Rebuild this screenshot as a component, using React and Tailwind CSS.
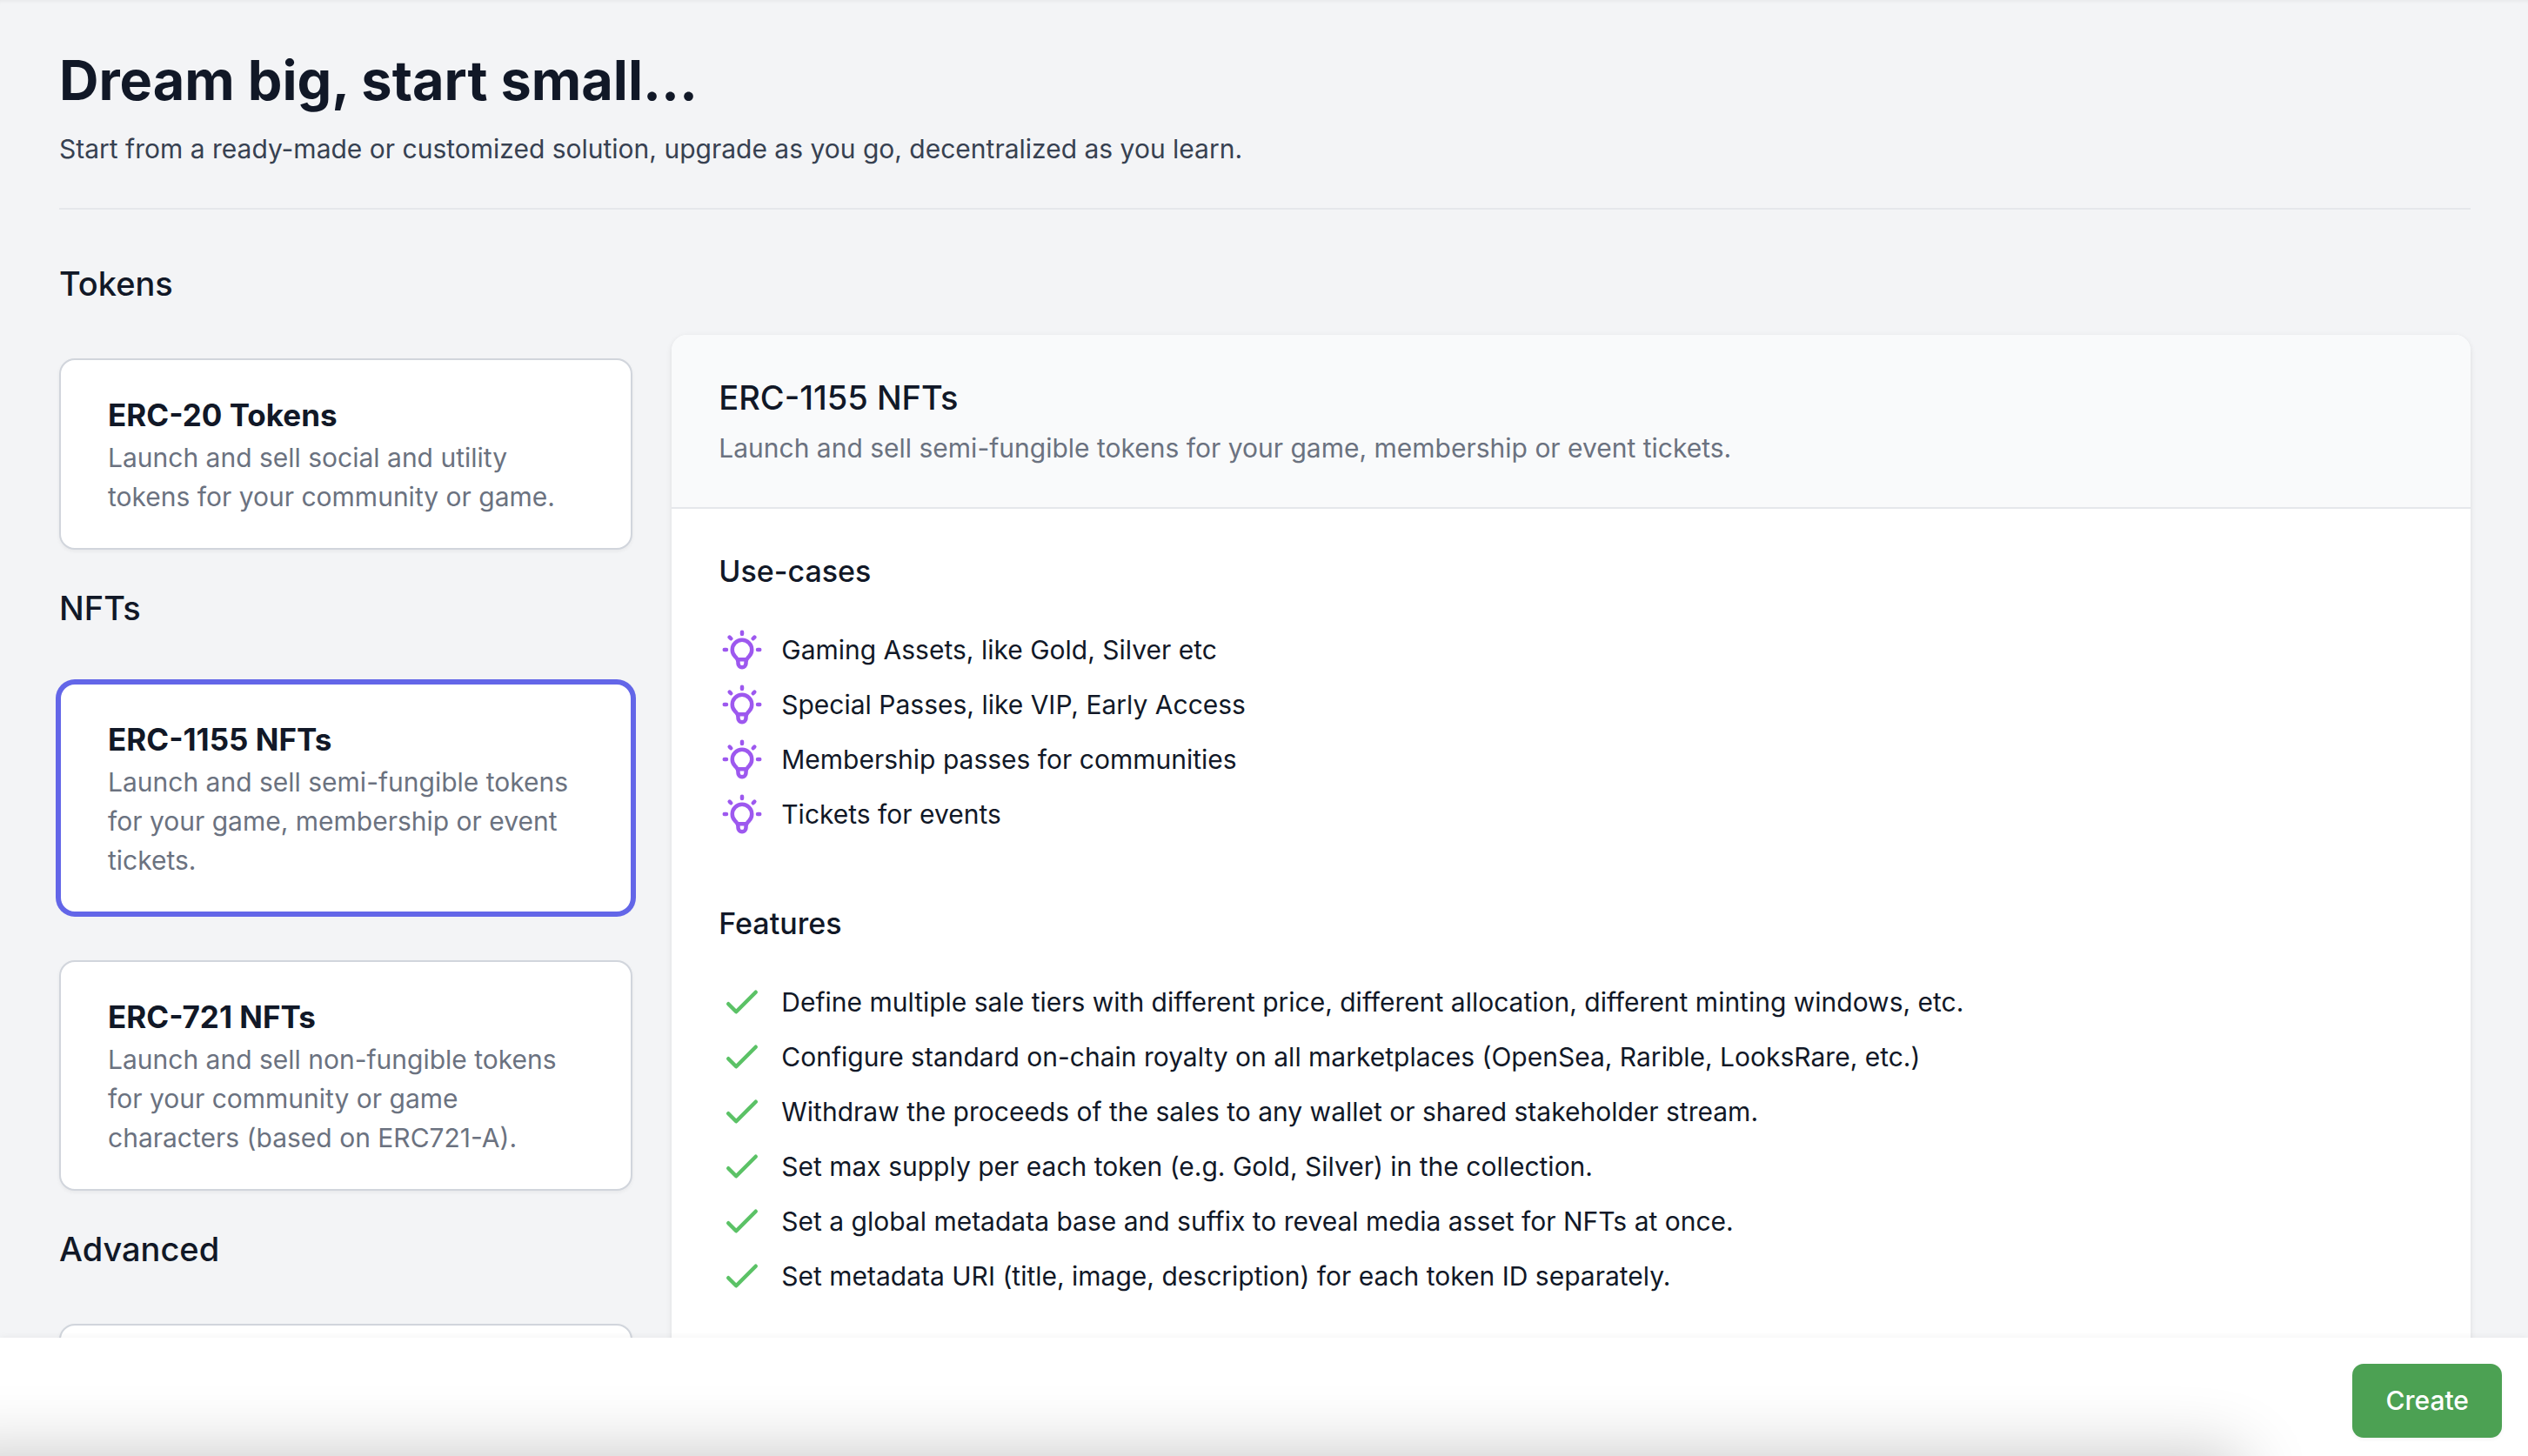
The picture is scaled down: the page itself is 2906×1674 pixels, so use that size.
const groups = [
  {
    name: "Tokens",
    items: [
      {
        title: "ERC-20 Tokens",
        text: "Launch and sell social and utility tokens for your community or game.",
      },
    ],
  },
  {
    name: "NFTs",
    items: [
      {
        title: "ERC-1155 NFTs",
        text: "Launch and sell semi-fungible tokens for your game, membership or event tickets.",
        selected: true,
      },
      {
        title: "ERC-721 NFTs",
        text: "Launch and sell non-fungible tokens for your community or game characters (based on ERC721-A).",
      },
    ],
  },
  { name: "Advanced", items: [{ title: "", text: "" }] },
];

const useCases = [
  "Gaming Assets, like Gold, Silver etc",
  "Special Passes, like VIP, Early Access",
  "Membership passes for communities",
  "Tickets for events",
];

const features = [
  "Define multiple sale tiers with different price, different allocation, different minting windows, etc.",
  "Configure standard on-chain royalty on all marketplaces (OpenSea, Rarible, LooksRare, etc.)",
  "Withdraw the proceeds of the sales to any wallet or shared stakeholder stream.",
  "Set max supply per each token (e.g. Gold, Silver) in the collection.",
  "Set a global metadata base and suffix to reveal media asset for NFTs at once.",
  "Set metadata URI (title, image, description) for each token ID separately.",
];

const bulb =
  "M9.663 17h4.673M12 3v1m6.364 1.636l-.707.707M21 12h-1M4 12H3m3.343-5.657l-.707-.707m2.828 9.9a5 5 0 117.072 0l-.548.547A3.374 3.374 0 0014 18.469V19a2 2 0 11-4 0v-.531c0-.895-.356-1.754-.988-2.386l-.548-.547z";
const check = "M5 13l4 4L19 7";

function Icon({ path, className }) {
  return (
    <svg
      viewBox="0 0 24 24"
      fill="none"
      stroke="currentColor"
      strokeWidth="2"
      strokeLinecap="round"
      strokeLinejoin="round"
      aria-hidden="true"
      className={"size-[54px] shrink-0 " + className}
    >
      <path d={path} />
    </svg>
  );
}

function OptionCard({ title, text, selected }) {
  return (
    <button
      type="button"
      aria-pressed={Boolean(selected)}
      aria-label={title || "Advanced option"}
      className={
        "block min-h-[220px] w-full rounded-[18px] border-2 bg-white px-[54px] py-9 text-left " +
        (selected
          ? "border-[#6366e8] ring-4 ring-[#6366e8]"
          : "border-gray-300 shadow-[0_2px_4px_rgba(0,0,0,0.05)]")
      }
    >
      <span className="block text-[35px] leading-[54px] font-bold">{title}</span>
      <span className="block text-[30px] leading-[45px] text-[#6b7280]">{text}</span>
    </button>
  );
}

function IconList({ title, items, path, iconClass }) {
  return (
    <section>
      <h3 className="text-[34px] leading-[54px] font-medium">{title}</h3>
      <ul className="mt-9 flex flex-col gap-[9px]">
        {items.map((item) => (
          <li key={item} className="flex items-center gap-[18px] text-[30px] leading-[54px]">
            <Icon path={path} className={iconClass} />
            <span>{item}</span>
          </li>
        ))}
      </ul>
    </section>
  );
}

export default function App() {
  return (
    <div className="flex h-screen flex-col overflow-hidden bg-[#f3f4f6] font-['Inter',sans-serif] text-[#111827]">
      <main className="min-h-0 flex-1 overflow-hidden pr-[66px] pl-[68px] shadow-[inset_0_6px_6px_-6px_rgba(0,0,0,0.08)]">
        <header className="border-b-2 border-[#e5e7eb] pt-[52px] pb-[45px]">
          <h1 className="text-[63px] leading-[80px] font-bold">Dream big, start small...</h1>
          <p className="mt-4 text-[30px] leading-[46px] text-[#374151]">
            Start from a ready-made or customized solution, upgrade as you go, decentralized as you learn.
          </p>
        </header>
        <div className="grid grid-cols-4 gap-[45px] pt-[54px]">
          <div className="flex flex-col gap-9">
            {groups.map((group) => (
              <section key={group.name}>
                <h2 className="text-[38px] leading-[63px] font-medium">{group.name}</h2>
                <div className="mt-[54px] flex flex-col gap-[54px]">
                  {group.items.map((item) => (
                    <OptionCard key={item.title} {...item} />
                  ))}
                </div>
              </section>
            ))}
          </div>
          <article className="col-span-3 mt-[90px] overflow-hidden rounded-[18px] bg-white shadow-[0_2px_6px_rgba(0,0,0,0.1)]">
            <div className="border-b-2 border-[#e5e7eb] bg-[#f9fafb] px-[54px] py-[45px]">
              <h2 className="text-[38px] leading-[54px] font-medium">ERC-1155 NFTs</h2>
              <p className="mt-[9px] text-[30px] leading-[45px] text-[#6b7280]">
                Launch and sell semi-fungible tokens for your game, membership or event tickets.
              </p>
            </div>
            <div className="flex flex-col gap-[72px] px-[54px] py-[45px]">
              <IconList title="Use-cases" items={useCases} path={bulb} iconClass="text-[#9d58ef]" />
              <IconList title="Features" items={features} path={check} iconClass="text-[#5bc266]" />
            </div>
          </article>
        </div>
      </main>
      <div className="relative shrink-0 shadow-[0_0_8px_rgba(0,0,0,0.06)]">
        <footer className="relative flex justify-end overflow-hidden bg-white px-[30px] pt-[30px] pb-[21px]">
          <div className="pointer-events-none absolute top-full right-[330px] -left-20 h-20 shadow-[0_0_80px_rgba(0,0,0,0.24)]" />
          <button
            type="button"
            className="relative rounded-[13px] bg-[#4ca153] px-[38px] py-5 text-[30px] leading-[45px] font-medium text-white shadow-[0_2px_4px_rgba(0,0,0,0.05)]"
          >
            Create
          </button>
        </footer>
      </div>
    </div>
  );
}
